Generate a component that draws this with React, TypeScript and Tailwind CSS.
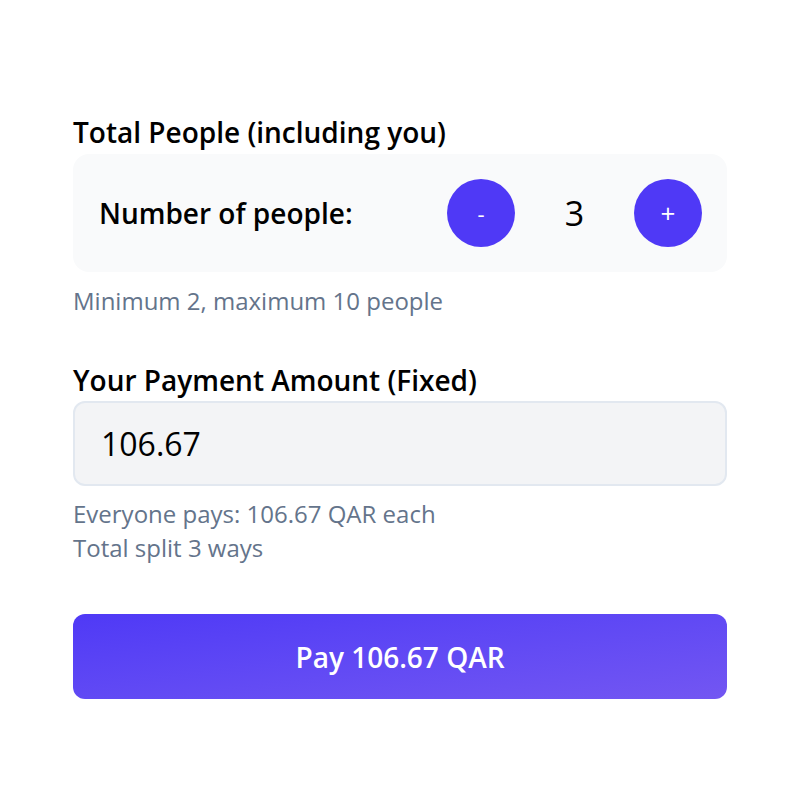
import { useState } from 'react';

export default function App() {
  const [people, setPeople] = useState(3);
  const total = 320;
  const share = (total / people).toFixed(2);

  return (
    <div className="min-h-screen bg-white font-['Open_Sans',sans-serif] text-black">
      <div className="mx-auto w-[654px] pt-[113px]">
        {/* People */}
        <div className="text-[28px] font-semibold leading-[38px]">Total People (including you)</div>
        <div className="mt-[3px] flex h-[118px] items-center rounded-2xl bg-[#f9fafb] pl-[26px] pr-[25px]">
          <span className="mr-auto text-[28px] font-semibold">Number of people:</span>
          <button
            onClick={() => setPeople((p) => Math.max(2, p - 1))}
            className="flex h-[68px] w-[68px] items-center justify-center rounded-full bg-[#4f39f6] text-[22px] text-white"
          >
            -
          </button>
          <span className="w-[119px] text-center text-[34px]">{people}</span>
          <button
            onClick={() => setPeople((p) => Math.min(10, p + 1))}
            className="flex h-[68px] w-[68px] items-center justify-center rounded-full bg-[#4f39f6] text-[26px] text-white"
          >
            +
          </button>
        </div>
        <p className="mt-[13px] text-[24px] leading-[32px] text-[#64748b]">Minimum 2, maximum 10 people</p>

        {/* Amount */}
        <div className="mt-[44px] text-[28px] font-semibold leading-[38px]">Your Payment Amount (Fixed)</div>
        <div className="mt-[2px] flex h-[85px] items-center rounded-xl border-2 border-[#e2e8f0] bg-[#f3f4f6] px-[26px] text-[32px]">
          {share}
        </div>
        <div className="mt-[11px] text-[24px] leading-[34px] text-[#64748b]">
          <p>Everyone pays: {share} QAR each</p>
          <p>Total split {people} ways</p>
        </div>

        <button className="mt-[49px] flex h-[85px] w-full items-center justify-center rounded-xl bg-gradient-to-br from-[#4f39f6] to-[#7356f2] text-[28px] font-semibold text-white">
          Pay {share} QAR
        </button>
      </div>
    </div>
  );
}
